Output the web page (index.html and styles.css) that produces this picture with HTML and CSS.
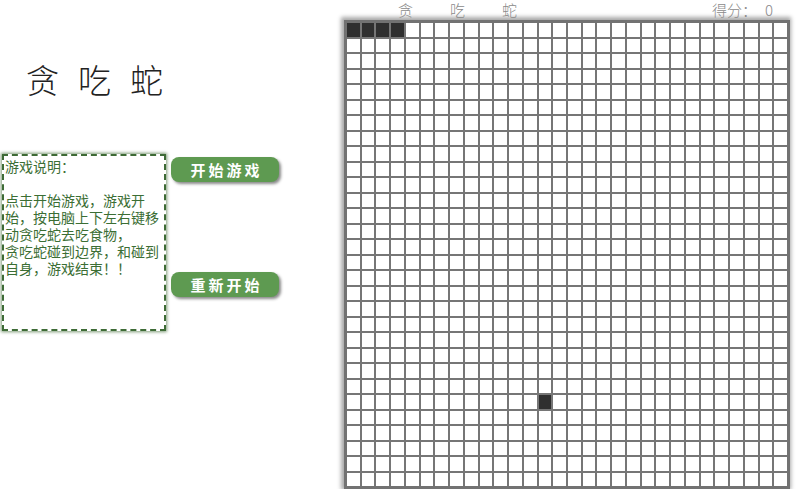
FILE: index.html
```html
<!DOCTYPE html>
<html lang="zh">
<head>
<meta charset="utf-8">
<title>贪吃蛇</title>
<link rel="stylesheet" href="styles.css">
</head>
<body>
<div class="page">
  <aside class="side">
    <h1 class="logo">贪吃蛇</h1>
    <div class="side-row">
      <div class="help">
        <p class="help-title">游戏说明：</p>
        <p class="help-text">点击开始游戏，游戏开始，按电脑上下左右键移动贪吃蛇去吃食物，<br>贪吃蛇碰到边界，和碰到自身，游戏结束！！</p>
      </div>
      <div class="buttons">
        <button class="btn">开始游戏</button>
        <button class="btn">重新开始</button>
      </div>
    </div>
  </aside>
  <main class="game">
    <div class="game-head">
      <span class="game-title">贪吃蛇</span>
      <span class="score">得分：<span class="score-num">0</span></span>
    </div>
    <div class="board" id="board"></div>
  </main>
</div>
<script src="app.js"></script>
</body>
</html>
```

FILE: styles.css
```css
html, body {
  margin: 0;
  padding: 0;
  background: #fff;
}
body {
  font-family: "Noto Sans CJK SC", "DejaVu Sans", sans-serif;
}
.page {
  display: flex;
  align-items: flex-start;
}
.side {
  width: 341px;
  flex: none;
}
.logo {
  margin: 58px 0 0 26px;
  font-size: 33px;
  line-height: 42px;
  font-weight: 300;
  letter-spacing: 19px;
  color: #222;
}
.side-row {
  display: flex;
  align-items: flex-start;
  margin-top: 54px;
}
.help {
  margin-left: 2px;
  width: 159px;
  height: 171px;
  border: 2px dashed #3e6b36;
  box-shadow: 0 0 3px 1px #7f9c78;
  padding: 2px 0 0 1px;
  box-sizing: content-box;
  color: #3b6e34;
  font-size: 14px;
  line-height: 17px;
}
.help p {
  margin: 0;
}
.help-title {
  margin-bottom: 17px !important;
}
.buttons {
  display: flex;
  flex-direction: column;
  gap: 90px;
  margin: 3px 0 0 5px;
}
.btn {
  width: 108px;
  height: 25px;
  padding: 0;
  border: none;
  border-radius: 8px;
  background: #5e9a51;
  color: #fff;
  font-family: inherit;
  font-size: 15px;
  font-weight: bold;
  letter-spacing: 3px;
  text-indent: 3px;
  box-shadow: 2px 2px 3px #8a8a8a;
}
.game {
  width: 452px;
  flex: none;
}
.game-head {
  display: flex;
  justify-content: space-between;
  height: 20px;
  line-height: 20px;
  font-size: 15px;
  color: #8a8a8a;
}
.game-title {
  margin-left: 57px;
  letter-spacing: 37px;
  font-weight: 300;
}
.score {
  margin-right: 20px;
  font-weight: 300;
}
.score-num {
  margin-left: 8px;
}
.board {
  margin-left: 3px;
  width: 440px;
  height: 463px;
  border: 3px solid #727272;
  background: #767676;
  display: grid;
  grid-template-columns: repeat(30, 1fr);
  grid-template-rows: repeat(30, 1fr);
  gap: 2px;
  box-shadow: -1px -1px 4px 2px #a9a9a9;
}
.cell {
  background: #fff;
}
.cell.snake,
.cell.food {
  background: #2f2f2f;
}
```

FILE: app.js
```js
var board = document.getElementById('board');
var snake = [0, 1, 2, 3];
var food = 24 * 30 + 13;
for (var i = 0; i < 900; i++) {
  var c = document.createElement('div');
  c.className = 'cell';
  if (snake.indexOf(i) >= 0) c.className += ' snake';
  if (i === food) c.className += ' food';
  board.appendChild(c);
}
```
